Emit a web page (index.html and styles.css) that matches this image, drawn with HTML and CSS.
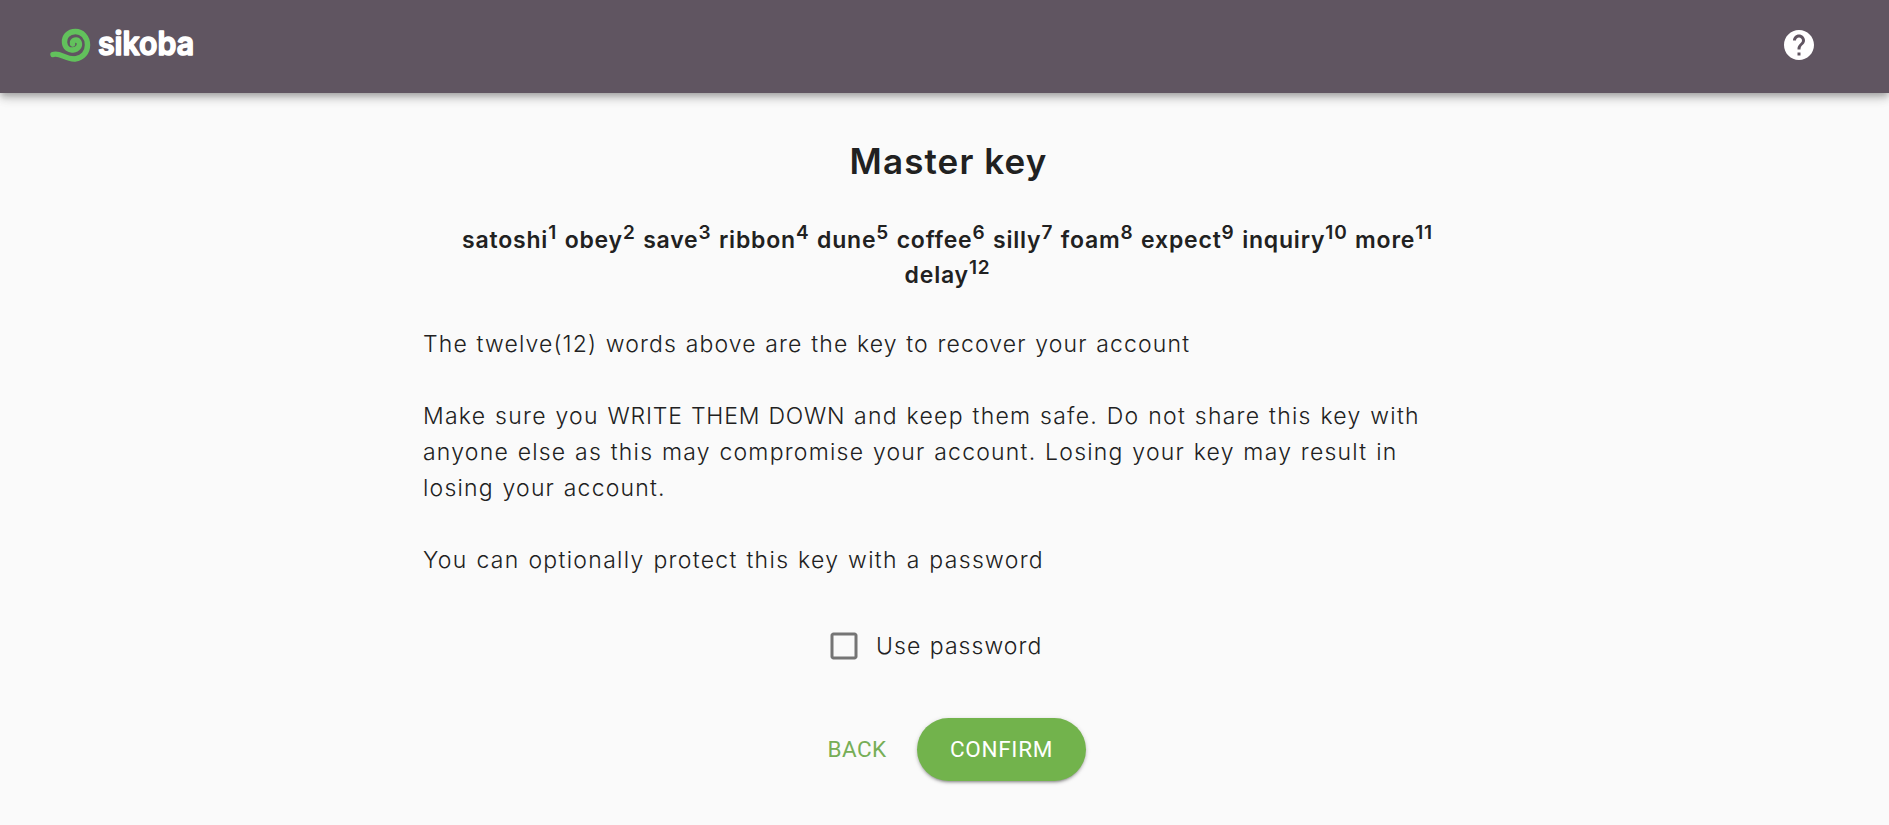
FILE: index.html
```html
<!DOCTYPE html>
<html lang="en">
<head>
<meta charset="utf-8">
<title>Sikoba - Master key</title>
<link rel="stylesheet" href="styles.css">
</head>
<body>
<header class="bar">
  <svg class="logo" viewBox="0 0 150 44" aria-label="sikoba">
    <path class="logo-mark" d="M3 32.500C10 30 15 37.500 25 37C33 36 37.500 30 37.500 23C37.500 15 32 9.500 25.500 9.500C18 9.500 14 15 14.500 20.500C15 26 19 28.500 23 28C28 27.500 30.500 23.500 29 20C27 16.500 22 18 22.500 22"/>
    <path class="logo-tail" d="M13 34C18 33.500 21 36 27 34L34 32C30 38 24 40 19 38Z"/>
    <text class="logo-text" x="48" y="33" textLength="96" lengthAdjust="spacingAndGlyphs">sikoba</text>
  </svg>
  <svg class="help" viewBox="0 0 24 24"><path d="M12 2C6.480 2 2 6.480 2 12s4.480 10 10 10 10-4.480 10-10S17.520 2 12 2zm1 17h-2v-2h2v2zm2.070-7.750l-.9.920C13.450 12.900 13 13.500 13 15h-2v-.5c0-1.100.45-2.100 1.170-2.830l1.240-1.260c.37-.36.590-.860.590-1.410 0-1.100-.9-2-2-2s-2 .9-2 2H8c0-2.210 1.790-4 4-4s4 1.790 4 4c0 .88-.36 1.680-.93 2.250z"/></svg>
</header>
<main class="page">
  <h1 class="title">Master key</h1>
  <div class="words">
    <div>satoshi<sup>1</sup> obey<sup>2</sup> save<sup>3</sup> ribbon<sup>4</sup> dune<sup>5</sup> coffee<sup>6</sup> silly<sup>7</sup> foam<sup>8</sup> expect<sup>9</sup> inquiry<sup>10</sup> more<sup>11</sup></div>
    <div>delay<sup>12</sup></div>
  </div>
  <div class="copy">
    <p><span class="l1">The twelve(12) words above are the key to recover your account</span></p>
    <p><span class="l2">Make sure you <span class="caps">WRITE THEM DOWN</span> and keep them safe. Do not share this key with</span><br>
    <span class="l3">anyone else as this may compromise your account. Losing your key may result in</span><br>
    <span class="l4">losing your account.</span></p>
    <p><span class="l5">You can optionally protect this key with a password</span></p>
  </div>
  <label class="check">
    <svg class="box" viewBox="0 0 24 24"><path d="M19 5v14H5V5h14m0-2H5c-1.100 0-2 .9-2 2v14c0 1.100.9 2 2 2h14c1.100 0 2-.9 2-2V5c0-1.100-.9-2-2-2z"/></svg>
    <span class="l6">Use password</span>
  </label>
  <div class="actions">
    <button class="btn back">BACK</button>
    <button class="btn confirm">CONFIRM</button>
  </div>
</main>
</body>
</html>
```
FILE: styles.css
```css
* { box-sizing: border-box; }
body { margin: 0; height: 825px; overflow: hidden; background: #fafafa; color: #212121; font-family: Inter, "Liberation Sans", sans-serif; }
.bar { height: 93px; background: #605561; display: flex; justify-content: space-between; align-items: flex-start; padding: 22px 72px 0 50px; box-shadow: 0 3px 6px -1px rgba(0,0,0,.2), 0 6px 8px rgba(0,0,0,.14), 0 1px 15px rgba(0,0,0,.12); }
.logo { width: 150px; height: 44px; overflow: visible; }
.logo-mark { fill: none; stroke: #62c15c; stroke-width: 5.4; stroke-linecap: round; }
.logo-tail { fill: #62c15c; }
.logo-text { font: 600 32px Inter, sans-serif; fill: #fff; stroke: #fff; stroke-width: 1.6; stroke-linejoin: round; }
.help { width: 36px; height: 36px; margin-top: 5px; fill: #fff; }
.page { width: 1049px; margin: 0 auto; }
.title { margin: 46px 0 0; padding-left: 8px; text-align: center; font-size: 35px; line-height: 45px; font-weight: 600; white-space: nowrap; letter-spacing: 1.1px; }
.words { margin-top: 39px; padding-left: 6px; text-align: center; font-size: 23px; line-height: 35px; font-weight: 600; white-space: nowrap; letter-spacing: .8px; word-spacing: 1px; }
.words sup { font-size: 19px; line-height: 0; vertical-align: 9px; }
.copy { margin-top: 33px; padding-left: 3px; font-size: 23px; line-height: 36px; font-weight: 300; white-space: nowrap; word-spacing: 1px; }
.copy p { margin: 0 0 36px; }
.l1 { letter-spacing: 1.14px; }
.l2 { letter-spacing: 1.26px; }
.l2 .caps { letter-spacing: .8px; }
.l3 { letter-spacing: 1.22px; }
.l4 { letter-spacing: 1.2px; }
.l5 { letter-spacing: 1.31px; }
.l6 { letter-spacing: 1.05px; }
.check { display: flex; align-items: center; gap: 14px; height: 36px; margin-top: 50px; padding-left: 406px; font-size: 23px; font-weight: 300; word-spacing: 1px; }
.box { width: 36px; height: 36px; fill: #757575; }
.actions { display: flex; align-items: center; margin-top: 54px; padding-left: 396px; gap: 19px; }
.btn { border: 0; height: 63px; padding: 0 0 2px; border-radius: 32px; font: 400 22.5px Roboto, sans-serif; letter-spacing: .7px; }
.back { width: 82px; background: none; color: #76ae56; letter-spacing: .4px; }
.confirm { width: 169px; background: #72b34c; color: #fff; box-shadow: 0 3px 2px -2px rgba(0,0,0,.2), 0 2px 3px rgba(0,0,0,.16), 0 1px 5px rgba(0,0,0,.14); }
```
